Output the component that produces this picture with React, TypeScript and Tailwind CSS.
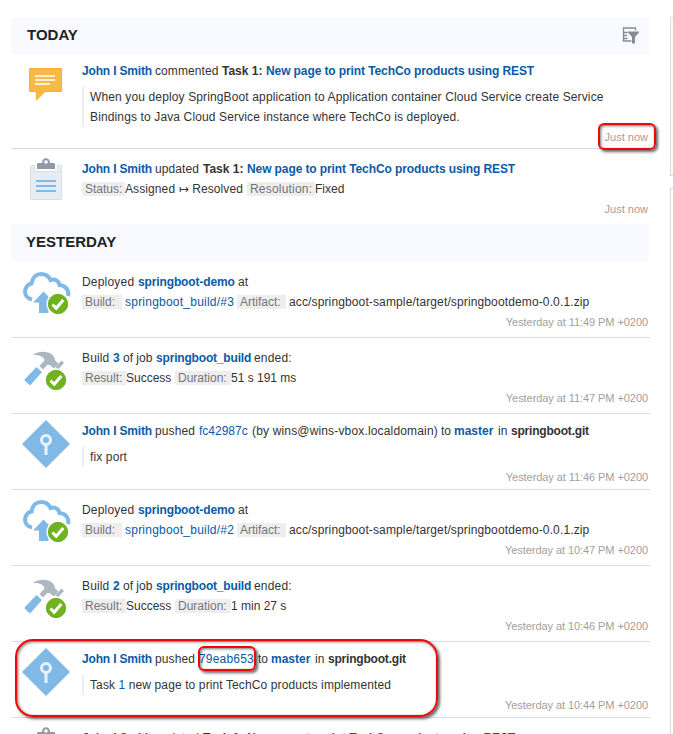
import type { ReactNode } from "react";

const LINK = "text-[#0b5aa6]";
const BOLD = "font-bold";
const BLINK = "font-bold text-[#0b5aa6]";

function Seg({ w, c = "", children }: { w: string; c?: string; children: ReactNode }) {
  return <span className={`block shrink-0 whitespace-pre ${w} ${c}`}>{children}</span>;
}

function Tag({ w, gap = "", children }: { w: string; gap?: string; children: ReactNode }) {
  return (
    <span className={`block h-3.5 shrink-0 whitespace-pre bg-[#eeeeee] pl-[3px] leading-[14px] text-[#757575] ${w} ${gap}`}>
      {children}
    </span>
  );
}

function Line({ children }: { children: ReactNode }) {
  return <div className="flex h-5 items-center leading-5">{children}</div>;
}

function Quote({ children }: { children: ReactNode }) {
  return <div className="mt-1.5 border-l-2 border-[#eeeeee] pl-1.5 leading-5 tracking-[0.13px] whitespace-pre">{children}</div>;
}

function CommentIcon() {
  return (
    <svg width="34" height="36" viewBox="0 0 34 36" className="mt-[13px] ml-[18px]">
      <path d="M1 .5h31a.5.5 0 0 1 .5.5v22a.5.5 0 0 1-.5.5H16L7.500 32v-8.500H1a.5.5 0 0 1-.5-.5V1A.5.5 0 0 1 1 .5z" fill="#f9b944" stroke="#f3ae38" />
      <path d="M6 8h20M6 12h20M6 16h15" stroke="#fef1d2" strokeWidth="2" />
    </svg>
  );
}

function ClipboardIcon() {
  return (
    <svg width="34" height="44" viewBox="0 0 34 44" className="mt-[8px] ml-[18px]">
      <path d="M2.500 8.500h29a1 1 0 0 1 1 1v32a1 1 0 0 1-1 1h-29a1 1 0 0 1-1-1v-32a1 1 0 0 1 1-1z" fill="#e5ecf4" stroke="#d5dfea" />
      <path d="M5.500 7.500V14.500h23V7.500" fill="#fff" stroke="#d5dfea" />
      <path d="M5 5h24v3H5z" fill="#fff" />
      <path d="M8 12V7q0-1 1-1h4a4 4.800 0 0 1 8 0h4q1 0 1 1v5z" fill="#8e9ba6" />
      <circle cx="17" cy="5" r="1.800" fill="#fff" />
      <path d="M7 24h20M7 29h20M7 34h20" stroke="#7fb9e6" strokeWidth="2" />
    </svg>
  );
}

function Check({ x, y }: { x: number; y: number }) {
  return (
    <g transform={`translate(${x} ${y})`}>
      <circle r="11.500" fill="#fff" />
      <circle r="9.700" fill="#6fb41c" stroke="#5aa30f" strokeWidth=".8" />
      <path d="M-5.500.5l3.700 3.700L5.300-4" fill="none" stroke="#fff" strokeWidth="3" />
    </g>
  );
}

function DeployIcon() {
  return (
    <svg width="50" height="46" viewBox="0 0 50 46" className="mt-[8px] ml-[11px]">
      <path d="M10 29.500C5.500 28.500 3 25 3 21.500c0-4 3-7.500 6.500-8C10.500 7 14.500 4 19 4c4.500 0 8 2.500 9.500 6 4.500-1.500 8.500 1 9 5C43.500 15.500 47.500 20 46 26" fill="none" stroke="#81b9e6" strokeWidth="4" />
      <path d="M21.500 21.500L32 32.500h-5.500V43H17V32.500h-6z" fill="#81b9e6" />
      <Check x={36} y={34} />
    </svg>
  );
}

function BuildIcon() {
  return (
    <svg width="50" height="46" viewBox="0 0 50 46" className="mt-[8px] ml-[11px]">
      <path d="M11 9C16 4.500 26 4.800 30 8.500c2.500 2 2.500 4.500 3.500 6.500l3 2.500-4.500 5-4.500-3.500-2-.2L21 23.500 17.500 20l5-5.500C22.500 10.500 16 8.500 11 9z" fill="#adb7c2" />
      <path d="M39.500 14.500l2.500 2.500-6 6.500-2.500-2.500z" fill="#adb7c2" />
      <path d="M14.500 21l5.500 5L9 38.500q-1 1-2 0l-4-3.500q-1-1 0-2z" fill="#81b9e6" />
      <Check x={34} y={34} />
    </svg>
  );
}

function PushIcon() {
  return (
    <svg width="50" height="50" viewBox="0 0 50 50" className="mt-[5px] ml-[10px]">
      <path d="M25 1l24 24-24 24L1 25z" fill="#81b9e6" />
      <circle cx="25" cy="21" r="4.500" fill="none" stroke="#e6f3fc" strokeWidth="3" />
      <path d="M25 25v11" stroke="#e6f3fc" strokeWidth="3" />
    </svg>
  );
}

function Header({ label, icon, pad }: { label: string; icon?: ReactNode; pad: string }) {
  return (
    <div className={`mr-px flex h-[38px] shrink-0 items-center justify-between bg-[#f9faff] pr-2.5 ${pad}`}>
      <h2 className="pb-0.5 text-[15px] leading-5 font-bold text-[#222]">{label}</h2>
      {icon}
    </div>
  );
}

function Row({ icon, time, h = "h-[76px]", pad = "pt-2.5", border = true, tc = "tracking-[-0.07px]", children }: {
  icon: ReactNode; time?: string; h?: string; pad?: string; border?: boolean; tc?: string; children: ReactNode;
}) {
  return (
    <article className={`flex shrink-0 ${h} ${border ? "border-b border-[#d3dde7]" : ""}`}>
      <div className="w-[71px] shrink-0">{icon}</div>
      <div className={`min-w-0 flex-1 ${pad}`}>
        {children}
        {time && <div className={`pr-0.5 text-right text-[11px] leading-5 text-[#a0a0a0] ${tc}`}>{time}</div>}
      </div>
    </article>
  );
}

function Name() {
  return <Seg w="w-[73px]" c={`${BLINK} tracking-[-0.17px]`}>John I Smith</Seg>;
}

function TaskTitle() {
  return (
    <>
      <Seg w="w-11" c={BOLD}>Task 1:</Seg>
      <Seg w="w-[280px]" c={`${BLINK} tracking-[-0.1px]`}>New page to print TechCo products using REST</Seg>
    </>
  );
}

function Deployed({ n, time }: { n: number; time: string }) {
  return (
    <Row icon={<DeployIcon />} time={time}>
      <Line>
        <Seg w="w-14" c="tracking-[0.2px]">Deployed</Seg>
        <Seg w="w-[100px]" c={`${BLINK} tracking-[-0.13px]`}>springboot-demo</Seg>
        <Seg w="w-4">at</Seg>
      </Line>
      <Line>
        <Tag w="w-10" gap="mr-[3px]">Build:</Tag>
        <Seg w="w-28" c={`${LINK} tracking-[0.23px]`}>springboot_build/#{n}</Seg>
        <Tag w="w-[49px]" gap="mr-[3px]">Artifact:</Tag>
        <Seg w="w-[310px]" c="tracking-[0.13px]">acc/springboot-sample/target/springbootdemo-0.0.1.zip</Seg>
      </Line>
    </Row>
  );
}

function Build({ n, duration, time }: { n: number; duration: string; time: string }) {
  return (
    <Row icon={<BuildIcon />} time={time}>
      <Line>
        <Seg w="w-[31px]" c="tracking-[0.15px]">Build</Seg>
        <Seg w="w-2.5" c={BLINK}>{n}</Seg>
        <Seg w="w-[33px]">of job</Seg>
        <Seg w="w-[98px]" c={`${BLINK} tracking-[-0.18px]`}>springboot_build</Seg>
        <Seg w="w-12" c="tracking-[0.2px]">ended:</Seg>
      </Line>
      <Line>
        <Tag w="w-11">Result:</Tag>
        <Seg w="w-[49px]">Success</Seg>
        <Tag w="w-14">Duration:</Tag>
        <Seg w="w-24">{duration}</Seg>
      </Line>
    </Row>
  );
}

const MARK = "pointer-events-none absolute border-2 border-[#f00808] shadow-[2px_2px_3px_rgba(0,0,0,.6),inset_1px_1px_3px_rgba(0,0,0,.55)]";

function FilterIcon() {
  return (
    <svg width="18" height="18" viewBox="0 0 18 18">
      <path d="M14.500 3.500V1H2.500v13h8M2.500 5.500h4M2.500 8.500h3.500M2.500 11.500h4" fill="none" stroke="#868b8e" strokeWidth="1.300" />
      <path d="M7 4.500h11v1L14 10v6.500h-3V10L7 5.500z" fill="#868b8e" />
    </svg>
  );
}

export default function App() {
  return (
    <div className="relative flex h-[734px] w-[673px] overflow-hidden bg-white pt-[17px] font-['Liberation_Sans',Arial,sans-serif] text-[12px] text-[#333]">
      <main className="ml-[11px] flex w-[639px] shrink-0 flex-col">
        <Header label="TODAY" pad="pl-4" icon={<FilterIcon />} />
        <Row icon={<CommentIcon />} time="Just now" h="h-[94px]" pad="pt-1.5" tc="">
          <Line>
            <Name />
            <Seg w="w-[67px]" c="tracking-[0.1px]">commented</Seg>
            <TaskTitle />
          </Line>
          <Quote>
            <div>When you deploy SpringBoot application to Application container Cloud Service create Service</div>
            <div>Bindings to Java Cloud Service instance where TechCo is deployed.</div>
          </Quote>
        </Row>
        <Row icon={<ClipboardIcon />} time="Just now" h="h-[75px]" border={false} tc="">
          <Line>
            <Name />
            <Seg w="w-12" c="tracking-[0.1px]">updated</Seg>
            <TaskTitle />
          </Line>
          <Line>
            <Tag w="w-[43px]">Status:</Tag>
            <Seg w="w-[122px]" c="tracking-[0.1px]">Assigned ↦ Resolved</Seg>
            <Tag w="w-[68px]"><span className="tracking-[0.2px]">Resolution:</span></Tag>
            <Seg w="w-10">Fixed</Seg>
          </Line>
        </Row>
        <Header label="YESTERDAY" pad="pl-[15px]" />
        <Deployed n={3} time="Yesterday at 11:49 PM +0200" />
        <Build n={3} duration="51 s 191 ms" time="Yesterday at 11:47 PM +0200" />
        <Row icon={<PushIcon />} time="Yesterday at 11:46 PM +0200" pad="pt-[7px]">
          <Line>
            <Name />
            <Seg w="w-11" c="tracking-[0.1px]">pushed</Seg>
            <Seg w="w-[53px]" c={LINK}>fc42987c</Seg>
            <Seg w="w-[189px]" c="tracking-[0.16px]">(by wins@wins-vbox.localdomain)</Seg>
            <Seg w="w-[13px]">to</Seg>
            <Seg w="w-11" c={BLINK}>master</Seg>
            <Seg w="w-[13px]">in</Seg>
            <Seg w="w-20" c={`${BOLD} tracking-[-0.2px]`}>springboot.git</Seg>
          </Line>
          <Quote>fix port</Quote>
        </Row>
        <Deployed n={2} time="Yesterday at 10:47 PM +0200" />
        <Build n={2} duration="1 min 27 s" time="Yesterday at 10:46 PM +0200" />
        <Row icon={<PushIcon />} time="Yesterday at 10:44 PM +0200" pad="pt-[7px]">
          <Line>
            <Name />
            <Seg w="w-11" c="tracking-[0.1px]">pushed</Seg>
            <Seg w="w-[59px]" c={`${LINK} tracking-[0.2px]`}>79eab653</Seg>
            <Seg w="w-[13px]">to</Seg>
            <Seg w="w-11" c={BLINK}>master</Seg>
            <Seg w="w-[13px]">in</Seg>
            <Seg w="w-20" c={`${BOLD} tracking-[-0.2px]`}>springboot.git</Seg>
          </Line>
          <Quote><span className="tracking-[0.11px]">Task <span className={LINK}>1</span> new page to print TechCo products implemented</span></Quote>
        </Row>
        <Row icon={<ClipboardIcon />} border={false}>
          <Line>
            <Name />
            <Seg w="w-12" c="tracking-[0.1px]">updated</Seg>
            <TaskTitle />
          </Line>
        </Row>
      </main>
      <aside className="ml-5 flex w-[3px] flex-col gap-3 overflow-hidden">
        <div className="h-[159px] w-10 shrink-0 border border-[#d3dde7] bg-[#fefaec]" />
        <div className="h-[560px] w-10 shrink-0 border border-[#d3dde7] bg-white" />
      </aside>
      <div className={`${MARK} top-[123px] left-[598px] h-[27px] w-[58px] rounded-md`} />
      <div className={`${MARK} top-[646px] left-[198px] h-[25px] w-[58px] rounded-md`} />
      <div className={`${MARK} top-[639px] left-[15px] h-[78px] w-[423px] rounded-[18px]`} />
    </div>
  );
}
